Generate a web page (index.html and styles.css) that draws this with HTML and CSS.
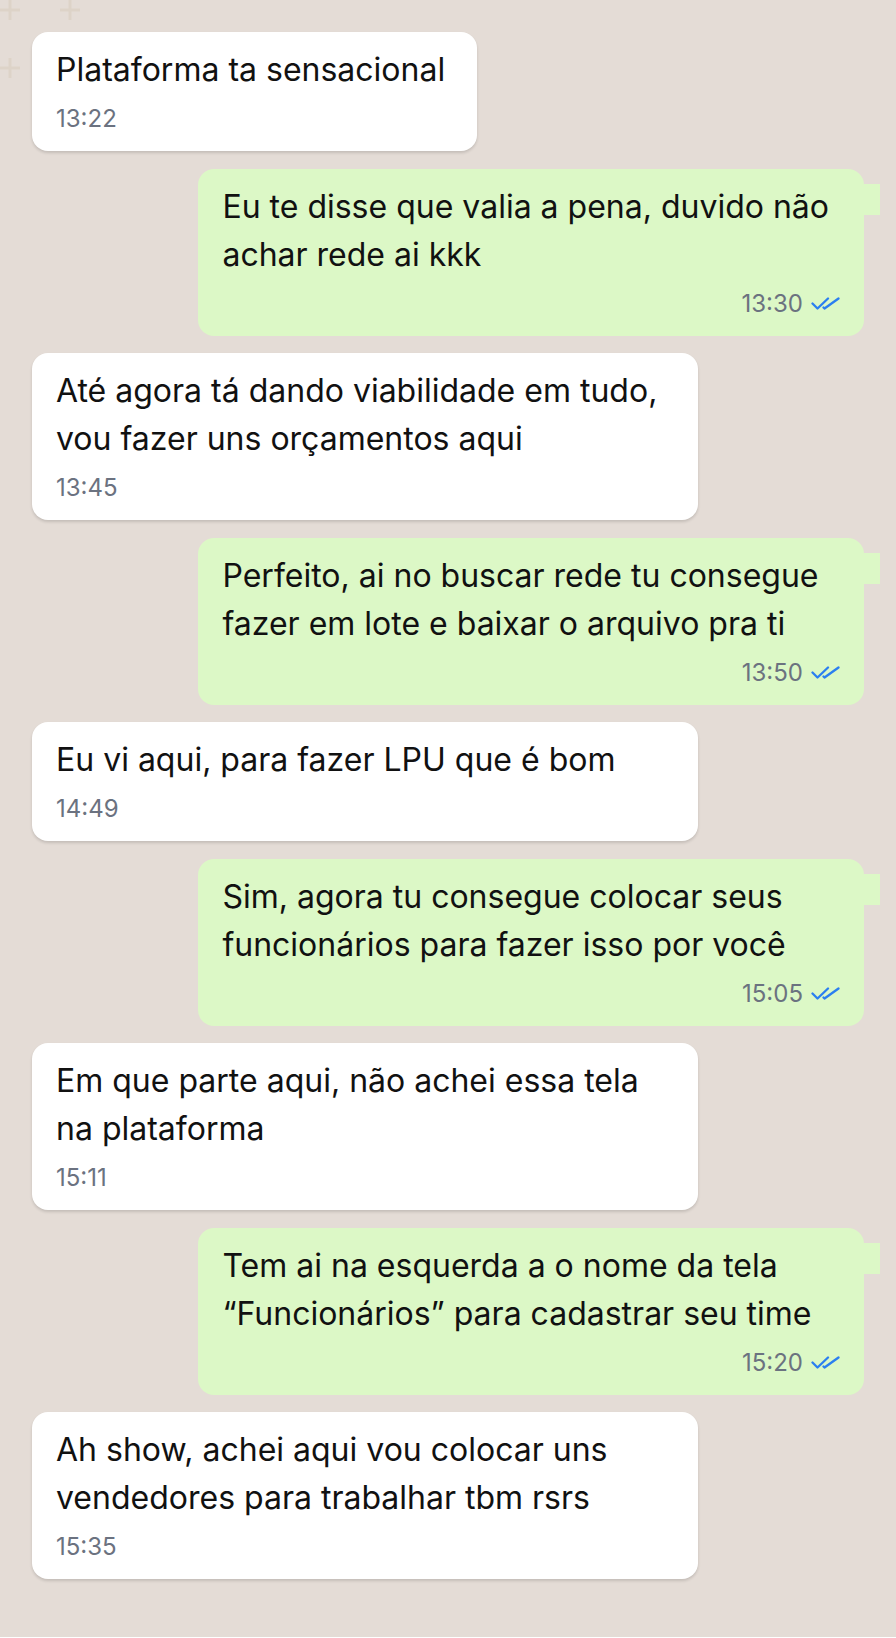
FILE: index.html
```html
<!DOCTYPE html>
<html lang="pt-BR">
<head>
    <meta charset="UTF-8">
    <meta name="viewport" content="width=device-width, initial-scale=1.0">
    <title>Conversa</title>
    <link rel="stylesheet" href="styles.css">
</head>
<body>
    <div class="chat">
        <div class="msg received short">
            <p class="text">Plataforma ta sensacional</p>
            <div class="meta"><span class="time">13:22</span></div>
        </div>
        <div class="msg sent">
            <p class="text">Eu te disse que valia a pena, duvido não achar rede ai kkk</p>
            <div class="meta">
                <span class="time">13:30</span>
                <svg class="check" viewBox="0 0 29 13" fill="none" stroke="currentColor" stroke-width="2.3" stroke-linecap="round" stroke-linejoin="round"><path d="M1.5 6.5L6.5 11.5L17 1.5"/><path d="M12.5 10.5L13.5 11.5L27.5 1.5"/></svg>
            </div>
        </div>
        <div class="msg received">
            <p class="text">Até agora tá dando viabilidade em tudo, vou fazer uns orçamentos aqui</p>
            <div class="meta"><span class="time">13:45</span></div>
        </div>
        <div class="msg sent">
            <p class="text">Perfeito, ai no buscar rede tu consegue fazer em lote e baixar o arquivo pra ti</p>
            <div class="meta">
                <span class="time">13:50</span>
                <svg class="check" viewBox="0 0 29 13" fill="none" stroke="currentColor" stroke-width="2.3" stroke-linecap="round" stroke-linejoin="round"><path d="M1.5 6.5L6.5 11.5L17 1.5"/><path d="M12.5 10.5L13.5 11.5L27.5 1.5"/></svg>
            </div>
        </div>
        <div class="msg received wide">
            <p class="text">Eu vi aqui, para fazer LPU que é bom</p>
            <div class="meta"><span class="time">14:49</span></div>
        </div>
        <div class="msg sent">
            <p class="text">Sim, agora tu consegue colocar seus funcionários para fazer isso por você</p>
            <div class="meta">
                <span class="time">15:05</span>
                <svg class="check" viewBox="0 0 29 13" fill="none" stroke="currentColor" stroke-width="2.3" stroke-linecap="round" stroke-linejoin="round"><path d="M1.5 6.5L6.5 11.5L17 1.5"/><path d="M12.5 10.5L13.5 11.5L27.5 1.5"/></svg>
            </div>
        </div>
        <div class="msg received">
            <p class="text">Em que parte aqui, não achei essa tela na plataforma</p>
            <div class="meta"><span class="time">15:11</span></div>
        </div>
        <div class="msg sent">
            <p class="text">Tem ai na esquerda a o nome da tela “Funcionários” para cadastrar seu time</p>
            <div class="meta">
                <span class="time">15:20</span>
                <svg class="check" viewBox="0 0 29 13" fill="none" stroke="currentColor" stroke-width="2.3" stroke-linecap="round" stroke-linejoin="round"><path d="M1.5 6.5L6.5 11.5L17 1.5"/><path d="M12.5 10.5L13.5 11.5L27.5 1.5"/></svg>
            </div>
        </div>
        <div class="msg received">
            <p class="text">Ah show, achei aqui vou colocar uns vendedores para trabalhar tbm rsrs</p>
            <div class="meta"><span class="time">15:35</span></div>
        </div>
    </div>
</body>
</html>
```

FILE: styles.css
```css
body {
    margin: 0;
    background-color: #ffffff;
    font-family: Inter, "Noto Sans", sans-serif;
}
.chat {
    display: flex;
    flex-direction: column;
    gap: 17.5px;
    padding: 32px 32px 58px;
    background-color: #e4dcd6;
    background-image: url("data:image/svg+xml,%3Csvg xmlns='http://www.w3.org/2000/svg' width='90' height='90'%3E%3Cg stroke='%23ddd3c8' stroke-width='3'%3E%3Cpath d='M10 0v20M0 10h20M70 0v20M60 10h20M10 58v20M0 68h20'/%3E%3C/g%3E%3C/svg%3E");
    background-repeat: no-repeat;
}
.msg {
    position: relative;
    max-width: 80%;
    box-sizing: border-box;
    padding: 14px 24px 17px;
    border-radius: 16px;
}
.received {
    align-self: flex-start;
    background-color: #ffffff;
    box-shadow: 0 2px 3px rgba(0, 0, 0, 0.14);
}
.received.short {
    padding-right: 32px;
}
.received.wide {
    width: 80%;
}
.sent {
    align-self: flex-end;
    width: 80%;
    background-color: #dcf8c6;
}
.sent::after {
    content: "";
    position: absolute;
    top: 15px;
    right: -16px;
    width: 16px;
    height: 31px;
    background-color: #dcf8c6;
}
.text {
    margin: 0;
    font-size: 32px;
    line-height: 48px;
    color: #111111;
}
.meta {
    display: flex;
    align-items: center;
    gap: 8px;
    margin-top: 10px;
    height: 30px;
}
.sent .meta {
    justify-content: flex-end;
}
.time {
    font-size: 24px;
    line-height: 30px;
    color: #6b7280;
}
.check {
    width: 29px;
    height: 13px;
    color: #2b7ff0;
}
```
